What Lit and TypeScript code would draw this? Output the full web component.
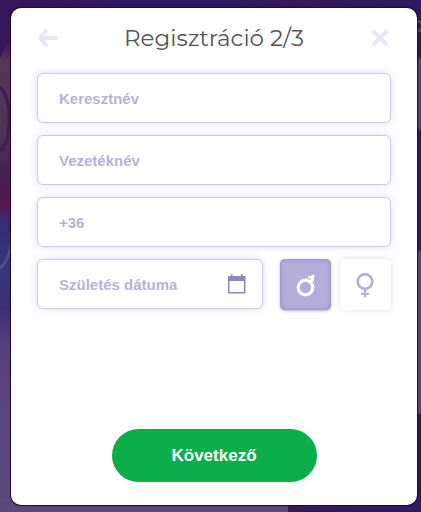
import { LitElement, html, css, svg } from "lit";
import { customElement, state } from "lit/decorators.js";

@customElement("page-backdrop")
class PageBackdrop extends LitElement {
  static styles = css`
    :host { display: block; overflow: hidden; background: #2d1b62; }
    svg { display: block; width: 100%; height: 100%; }
  `;

  render() {
    return html`<svg viewBox="0 0 421 512" preserveAspectRatio="none" aria-hidden="true">
      <defs>
        <linearGradient id="top" x1="0" x2="1" y1="0" y2="0">
          <stop offset="0" stop-color="#371759" /><stop offset="0.45" stop-color="#2b1a69" />
          <stop offset="0.7" stop-color="#341a58" /><stop offset="1" stop-color="#2d1b62" />
        </linearGradient>
        <linearGradient id="side" x1="0" x2="0" y1="0" y2="1">
          <stop offset="0" stop-color="#371759" /><stop offset="0.08" stop-color="#391b5a" />
          <stop offset="0.12" stop-color="#563553" /><stop offset="0.26" stop-color="#503253" />
          <stop offset="0.34" stop-color="#442151" /><stop offset="0.38" stop-color="#4d1951" />
          <stop offset="0.4" stop-color="#5a1751" /><stop offset="0.43" stop-color="#362b70" />
          <stop offset="0.52" stop-color="#353779" /><stop offset="0.6" stop-color="#3b2f73" />
          <stop offset="0.68" stop-color="#56427a" /><stop offset="1" stop-color="#5c4b7d" />
        </linearGradient>
      </defs>
      <rect width="421" height="512" fill="url(#top)" />
      <rect width="14" height="512" fill="url(#side)" />
      <path d="M0 0H14V38Q6 44 0 58Z" fill="#371759" />
      <path d="M0 87Q10 97 9 122T0 150" fill="none" stroke="#362158" stroke-width="3" />
      <path d="M0 268Q7 263 11 246" fill="none" stroke="#544b87" stroke-width="3" />
      <rect x="0" y="502" width="288" height="10" fill="#594879" />
      <rect x="414" y="58" width="7" height="72" fill="#55447a" />
      <rect x="414" y="130" width="7" height="121" fill="#2f1c70" />
      <rect x="414" y="251" width="7" height="163" fill="#59477a" />
      <circle cx="417" cy="26" r="5" fill="none" stroke="#60518a" stroke-width="2" />
    </svg>`;
  }
}

@customElement("app-root")
class AppRoot extends LitElement {
  @state() private gender = "male";

  static styles = css`
    :host {
      display: grid;
      grid-template-columns: minmax(0, 1fr);
      min-height: 100vh;
      box-sizing: border-box;
      padding: 8px 4px 7px 11px;
      position: relative;
      font-family: "Liberation Sans", Arial, sans-serif;
    }
    * { box-sizing: border-box; }
    .backdrop { position: absolute; inset: 0; }
    .card {
      position: relative;
      display: flex;
      flex-direction: column;
      min-width: 0;
      padding: 0 26px 23px;
      border-radius: 10px;
      background: #fff;
      box-shadow: 0 0 1px 1px #20064a;
    }
    header {
      display: flex;
      align-items: center;
      justify-content: space-between;
      height: 60px;
    }
    h1 {
      margin: 0;
      color: #555;
      font: 400 23px/32px Montserrat, Inter, sans-serif;
    }
    .icon-button {
      display: flex;
      flex: none;
      width: 22px;
      padding: 0;
      border: 0;
      background: none;
      cursor: pointer;
    }
    .fields { display: flex; flex-direction: column; gap: 12px; padding-top: 5px; }
    .field {
      display: flex;
      align-items: center;
      width: 100%;
      height: 50px;
      border: 1px solid #cfcbe2;
      border-radius: 6px;
      background: #fff;
      box-shadow: 0 0 8px #dfdcf2;
    }
    .field input {
      flex: 1;
      width: 100%;
      min-width: 0;
      height: 100%;
      padding: 0 0 0 21px;
      border: 0;
      outline: 0;
      background: none;
      color: #8d80bf;
      font: 700 15px "Liberation Sans", Arial, sans-serif;
    }
    .field input::placeholder { color: #b8b1da; opacity: 1; }
    .field:focus-within { border-color: #8d80bf; }
    .date .icon-button { margin-right: 14px; }
    .row { display: flex; gap: 17px; }
    .row .date { flex: 1; min-width: 0; }
    .genders { display: flex; flex: none; gap: 9px; margin: 0; padding: 0; border: 0; }
    .gender {
      position: relative;
      display: flex;
      width: 51px;
      height: 51px;
      border-radius: 5px;
      color: #b5addb;
      box-shadow: 0 0 6px #dddae8;
      cursor: pointer;
    }
    .gender input { position: absolute; inset: 0; margin: 0; opacity: 0; }
    .gender.on {
      color: #fff;
      background: #b5addb;
      box-shadow: inset 0 0 5px #9389b8, 0 1px 3px #b5addb;
    }
    .next {
      align-self: center;
      width: 205px;
      height: 53px;
      margin-top: auto;
      border: 0;
      border-radius: 27px;
      background: #0cae49;
      color: #fff;
      font: 700 17px "Liberation Sans", Arial, sans-serif;
      cursor: pointer;
    }
  `;

  private textField(name: string, label: string, type = "text") {
    return html`<div class="field">
      <input type=${type} name=${name} aria-label=${label} placeholder=${label} />
    </div>`;
  }

  private genderOption(value: string, label: string, icon: unknown) {
    const on = this.gender === value;
    return html`<label class="gender ${on ? "on" : ""}">
      <input type="radio" name="gender" value=${value} aria-label=${label} .checked=${on}
        @change=${() => (this.gender = value)} />
      <svg width="51" height="51" viewBox="0 0 51 51" fill="none" stroke="currentColor" aria-hidden="true">${icon}</svg>
    </label>`;
  }

  render() {
    return html`
      <page-backdrop class="backdrop"></page-backdrop>
      <form class="card" @submit=${(e: Event) => e.preventDefault()}>
        <header>
          <button class="icon-button" type="button" aria-label="Vissza">
            <svg width="22" height="20" viewBox="0 0 22 20" fill="none" stroke="#e9e6f5" stroke-width="4">
              <path d="M10 2L3 10L10 18M3 10H21" />
            </svg>
          </button>
          <h1>Regisztráció 2/3</h1>
          <button class="icon-button" type="button" aria-label="Bezárás">
            <svg width="22" height="20" viewBox="0 0 22 20" fill="none" stroke="#e9e6f5" stroke-width="4">
              <path d="M4 3L18 17M18 3L4 17" />
            </svg>
          </button>
        </header>
        <div class="fields">
          ${this.textField("first", "Keresztnév")}
          ${this.textField("last", "Vezetéknév")}
          ${this.textField("phone", "+36", "tel")}
          <div class="row">
            <div class="field date">
              <input type="text" name="birth" aria-label="Születés dátuma" placeholder="Születés dátuma" />
              <button class="icon-button" type="button" aria-label="Naptár">
                <svg width="22" height="22" viewBox="0 0 22 22">
                  <path fill="#9084c1" fill-rule="evenodd"
                    d="M2 3H5V1H6.500V3H15V1H16.500V3H19.500V20.500H2ZM3.500 8V19H18V8Z" />
                </svg>
              </button>
            </div>
            <fieldset class="genders" aria-label="Nem">
              ${this.genderOption("male", "Férfi", svg`
                <circle cx="25.500" cy="28.500" r="7.300" stroke-width="3.200" />
                <path d="M30 24L33 19" stroke-width="2.500" />
                <path d="M27 18L34.500 15.500L33.500 23.500L31 20Z" fill="currentColor" stroke="none" />`)}
              ${this.genderOption("female", "Nő", svg`
                <circle cx="25" cy="22.500" r="7.300" stroke-width="2.700" />
                <path d="M25 30V38.500M21 35H29" stroke-width="2.200" />`)}
            </fieldset>
          </div>
        </div>
        <button class="next" type="submit">Következő</button>
      </form>
    `;
  }
}
